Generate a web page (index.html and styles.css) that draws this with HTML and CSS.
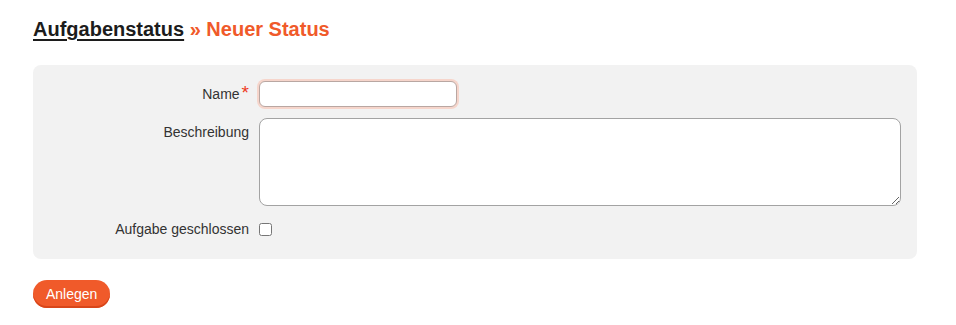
FILE: index.html
```html
<!DOCTYPE html>
<html lang="de">
<head>
<meta charset="utf-8">
<title>Neuer Status</title>
<link rel="stylesheet" href="styles.css">
</head>
<body>
<div class="page">
  <h2 class="title"><a href="#" class="crumb">Aufgabenstatus</a> <span class="sep">»</span> Neuer Status</h2>
  <form class="form">
    <div class="box">
      <label class="lbl lbl-name" for="name">Name<span class="req">*</span></label>
      <div class="field"><input id="name" class="input input-focus" type="text" autofocus></div>
      <label class="lbl lbl-top" for="desc">Beschreibung</label>
      <div class="field"><textarea id="desc" class="textarea"></textarea></div>
      <label class="lbl lbl-check" for="closed">Aufgabe geschlossen</label>
      <div class="field field-check"><input id="closed" class="check" type="checkbox"></div>
    </div>
    <button type="button" class="btn">Anlegen</button>
  </form>
</div>
</body>
</html>
```
FILE: styles.css
```css
html, body {
  margin: 0;
  padding: 0;
  background: #ffffff;
}
body {
  font-family: "Liberation Sans", Arial, sans-serif;
  font-size: 14px;
  color: #333333;
}
.page {
  padding: 15px 39px 0 33px;
}
.title {
  margin: 0;
  font-size: 20px;
  font-weight: bold;
  line-height: 28px;
  color: #f05a2a;
}
.crumb {
  color: #1c1c1c;
  text-decoration: underline;
  text-underline-offset: 3px;
  text-decoration-thickness: 2px;
}
.sep {
  color: #f05a2a;
}
.box {
  margin-top: 22px;
  background: #f2f2f2;
  border-radius: 8px;
  padding: 16px 16px 22px 0;
  display: grid;
  grid-template-columns: 216px 1fr;
  column-gap: 10px;
  row-gap: 11px;
  align-items: center;
}
.lbl {
  text-align: right;
  color: #333333;
  line-height: 16px;
}
.lbl-top {
  align-self: start;
  padding-top: 6px;
}
.lbl-check,
.field-check {
  margin-top: 4px;
}
.req {
  color: #ee3a22;
  margin-left: 2px;
  font-size: 19px;
  line-height: 10px;
}
.field {
  display: flex;
  align-items: center;
}
.input {
  box-sizing: border-box;
  width: 198px;
  height: 26px;
  border: 1px solid #a9a9a9;
  border-radius: 6px;
  background: #fff;
  padding: 2px 8px;
  font: inherit;
  outline: none;
}
.input-focus {
  border-color: #b9a7a2;
  box-shadow: 0 0 0 2px #f6d5cb;
}
.textarea {
  box-sizing: border-box;
  width: 100%;
  height: 88px;
  border: 1px solid #a3a3a3;
  border-radius: 8px;
  background: #fff;
  font: inherit;
  resize: vertical;
  margin: 0;
  display: block;
}
.check {
  margin: 0;
  width: 13px;
  height: 13px;
}
.btn {
  margin-top: 21px;
  height: 28px;
  padding: 0 13px;
  border: none;
  border-radius: 14px;
  background: #f05a2a;
  color: #ffffff;
  font-family: "Liberation Sans", Arial, sans-serif;
  font-size: 14px;
  box-shadow: inset 0 -2px 0 #d8461a;
}
```
